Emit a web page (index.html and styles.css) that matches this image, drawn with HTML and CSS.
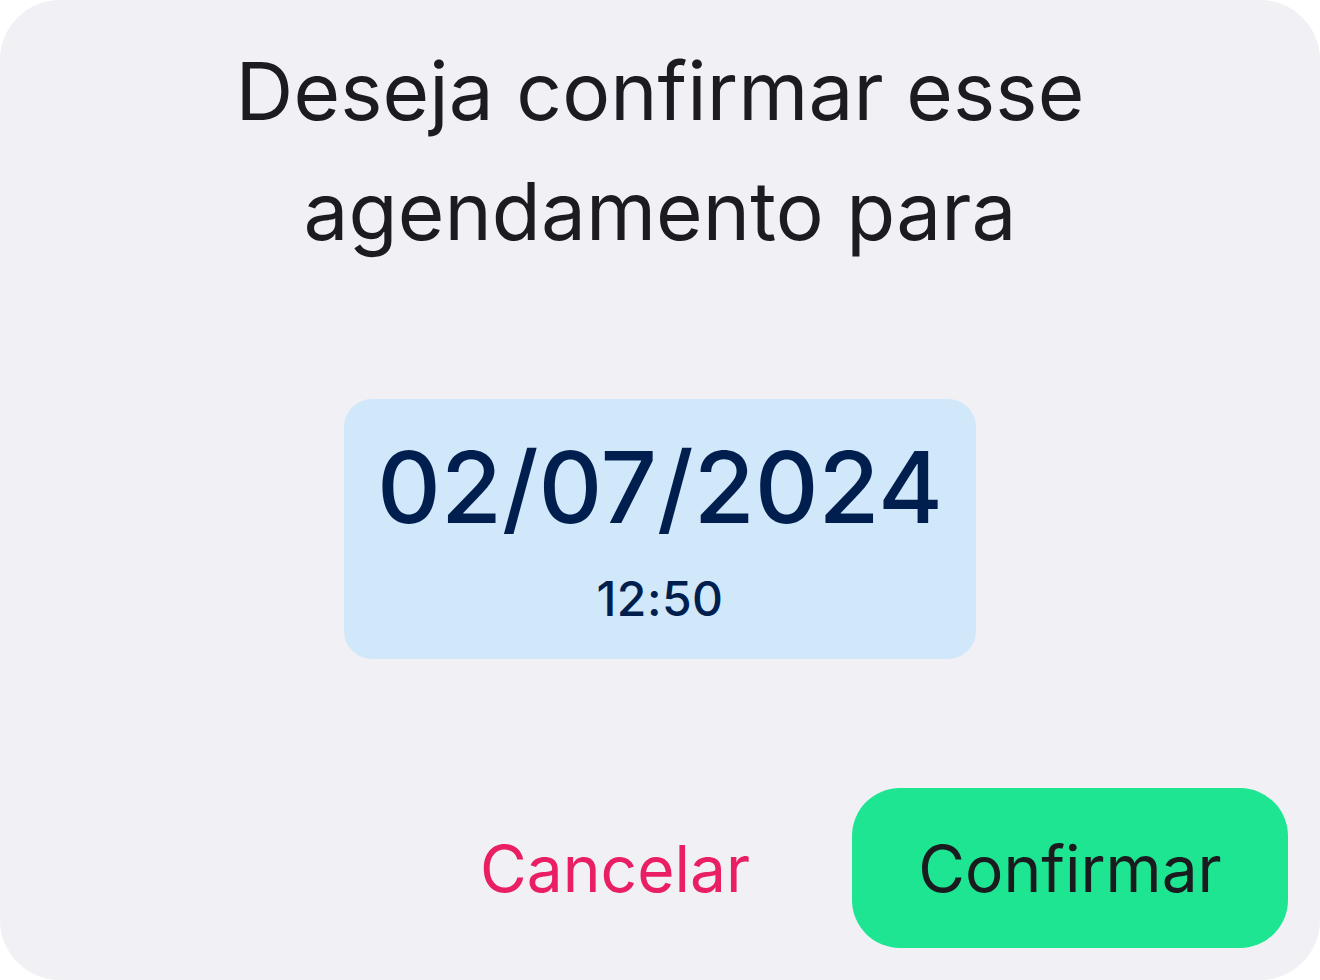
FILE: index.html
```html
<!DOCTYPE html>
<html lang="pt-BR">
<head>
<meta charset="utf-8">
<title>Confirmar agendamento</title>
<link rel="stylesheet" href="styles.css">
</head>
<body>
<div class="dialog">
  <h1 class="title">Deseja confirmar esse<br>agendamento para</h1>
  <div class="datebox">
    <div class="date">02/07/2024</div>
    <div class="time">12:50</div>
  </div>
  <div class="actions">
    <button class="btn-cancel">Cancelar</button>
    <button class="btn-confirm">Confirmar</button>
  </div>
</div>
</body>
</html>
```
FILE: styles.css
```css
html, body {
  margin: 0;
  padding: 0;
  background: #ffffff;
}
body {
  font-family: Inter, "Noto Sans", sans-serif;
}
.dialog {
  width: 1320px;
  height: 980px;
  box-sizing: border-box;
  background: #f0f0f5;
  border-radius: 60px;
  padding: 31px 32px 32px;
  display: flex;
  flex-direction: column;
  align-items: center;
}
.title {
  margin: 0;
  font-size: 80px;
  font-weight: 400;
  line-height: 120px;
  color: #1c1b20;
  text-align: center;
  letter-spacing: 0.1px;
}
.datebox {
  margin-top: 128px;
  width: 632px;
  height: 260px;
  box-sizing: border-box;
  background: #d1e7fa;
  border-radius: 28px;
  display: flex;
  flex-direction: column;
  align-items: center;
  padding-top: 28px;
}
.date {
  font-size: 99px;
  line-height: 120px;
  font-weight: 500;
  color: #001f4f;
}
.time {
  margin-top: 22px;
  font-size: 48px;
  line-height: 60px;
  font-weight: 500;
  color: #001f4f;
  letter-spacing: 0.5px;
}
.actions {
  margin-top: auto;
  align-self: stretch;
  display: flex;
  justify-content: flex-end;
  align-items: center;
  gap: 102px;
}
.btn-cancel {
  border: none;
  background: none;
  padding: 0;
  font-family: inherit;
  font-size: 64px;
  font-weight: 400;
  color: #e91e63;
}
.btn-confirm {
  border: none;
  width: 436px;
  height: 160px;
  border-radius: 48px;
  background: #1de592;
  font-family: inherit;
  font-size: 64px;
  font-weight: 400;
  color: #1a1b1f;
}
```
